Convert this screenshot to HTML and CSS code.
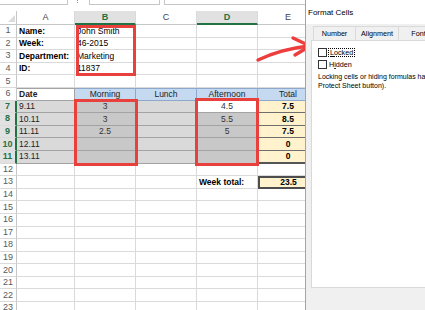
FILE: index.html
```html
<!DOCTYPE html>
<html>
<head>
<meta charset="utf-8">
<link rel="stylesheet" href="styles.css">
</head>
<body>
<div class="app">
  <div class="fbar">
    <div class="fbox namebox"></div>
    <div class="fdots"></div>
    <div class="fbox ficons"></div>
    <div class="fbox finput"></div>
  </div>
  <div class="sheet">
    <div class="c corner"><span class="tri"></span></div>
    <div class="c ch">A</div>
    <div class="c ch sel">B</div>
    <div class="c ch">C</div>
    <div class="c ch sel">D</div>
    <div class="c ch">E</div>

    <div class="c rh">1</div><div class="c b">Name:</div><div class="c">John Smith</div><div class="c"></div><div class="c"></div><div class="c"></div>
    <div class="c rh">2</div><div class="c b">Week:</div><div class="c">46-2015</div><div class="c"></div><div class="c"></div><div class="c"></div>
    <div class="c rh">3</div><div class="c b">Department:</div><div class="c">Marketing</div><div class="c"></div><div class="c"></div><div class="c"></div>
    <div class="c rh">4</div><div class="c b">ID:</div><div class="c">11837</div><div class="c"></div><div class="c"></div><div class="c"></div>
    <div class="c rh">5</div><div class="c"></div><div class="c"></div><div class="c"></div><div class="c"></div><div class="c"></div>

    <div class="c rh">6</div><div class="c t top b">Date</div><div class="c t hd ctr">Morning</div><div class="c t hd ctr">Lunch</div><div class="c t hd ctr">Afternoon</div><div class="c t hd ctr">Total</div>
    <div class="c rh sel">7</div><div class="c t g1">9.11</div><div class="c t g2 ctr">3</div><div class="c t g1"></div><div class="c t wh ctr">4.5</div><div class="c t yl ctr">7.5</div>
    <div class="c rh sel">8</div><div class="c t g1">10.11</div><div class="c t g2 ctr">3</div><div class="c t g1"></div><div class="c t g2 ctr">5.5</div><div class="c t yl ctr">8.5</div>
    <div class="c rh sel">9</div><div class="c t g1">11.11</div><div class="c t g2 ctr">2.5</div><div class="c t g1"></div><div class="c t g2 ctr">5</div><div class="c t yl ctr">7.5</div>
    <div class="c rh sel">10</div><div class="c t g1">12.11</div><div class="c t g2"></div><div class="c t g1"></div><div class="c t g2"></div><div class="c t yl ctr">0</div>
    <div class="c rh sel">11</div><div class="c t g1">13.11</div><div class="c t g2"></div><div class="c t g1"></div><div class="c t g2"></div><div class="c t yl ylast ctr">0</div>

    <div class="c rh">12</div><div class="c"></div><div class="c"></div><div class="c"></div><div class="c"></div><div class="c"></div>
    <div class="c rh">13</div><div class="c"></div><div class="c"></div><div class="c"></div><div class="c b">Week total:</div><div class="c wtot ctr">23.5</div>
    <div class="c rh">14</div><div class="c"></div><div class="c"></div><div class="c"></div><div class="c"></div><div class="c"></div>
    <div class="c rh">15</div><div class="c"></div><div class="c"></div><div class="c"></div><div class="c"></div><div class="c"></div>
    <div class="c rh">16</div><div class="c"></div><div class="c"></div><div class="c"></div><div class="c"></div><div class="c"></div>
    <div class="c rh">17</div><div class="c"></div><div class="c"></div><div class="c"></div><div class="c"></div><div class="c"></div>
    <div class="c rh">18</div><div class="c"></div><div class="c"></div><div class="c"></div><div class="c"></div><div class="c"></div>
    <div class="c rh">19</div><div class="c"></div><div class="c"></div><div class="c"></div><div class="c"></div><div class="c"></div>
    <div class="c rh">20</div><div class="c"></div><div class="c"></div><div class="c"></div><div class="c"></div><div class="c"></div>
    <div class="c rh">21</div><div class="c"></div><div class="c"></div><div class="c"></div><div class="c"></div><div class="c"></div>
    <div class="c rh">22</div><div class="c"></div><div class="c"></div><div class="c"></div><div class="c"></div><div class="c"></div>
    <div class="c rh">23</div><div class="c"></div><div class="c"></div><div class="c"></div><div class="c"></div><div class="c"></div>
  </div>

  <div class="redbox rb1"></div>
  <div class="redbox rb2"></div>
  <div class="redbox rb3"></div>

  <svg class="arrow" width="425" height="310" viewBox="0 0 425 310">
    <path d="M258 60 Q281 49 309 46" fill="none" stroke="#ee3d3d" stroke-width="3.4" stroke-linecap="round"/>
    <path d="M293 38 L310 46 L295 55" fill="none" stroke="#ee3d3d" stroke-width="3.4" stroke-linecap="round" stroke-linejoin="round"/>
  </svg>

  <div class="dialog">
    <div class="dtitle">Format Cells</div>
    <div class="tabs">
      <div class="tab t-num">Number</div>
      <div class="tab t-ali">Alignment</div>
      <div class="tab t-font">Font</div>
    </div>
    <div class="pane">
      <div class="cbrow">
        <span class="cb"></span><span class="lbl focus"><u>L</u>ocked</span>
      </div>
      <div class="cbrow row2">
        <span class="cb"></span><span class="lbl">H<u>i</u>dden</span>
      </div>
      <div class="note">
        <span class="line">Locking cells or hiding formulas has no effect until you protect the worksheet (Review tab, Protect group,</span>
        <span class="line">Protect Sheet button).</span>
      </div>
    </div>
  </div>
</div>
</body>
</html>
```

FILE: styles.css
```css
html, body {
  margin: 0;
  padding: 0;
}
body {
  width: 425px;
  height: 310px;
  overflow: hidden;
  background: #ffffff;
  font-family: "Liberation Sans", Arial, sans-serif;
  color: #000;
}
.app {
  position: relative;
  width: 425px;
  height: 310px;
  overflow: hidden;
}

/* formula bar (cut off at top) */
.fbar {
  display: flex;
  height: 5px;
  margin-bottom: 6px;
}
.fbox {
  box-sizing: border-box;
  height: 5px;
  border-bottom: 1px solid #c6c6c6;
  background: #fff;
}
.namebox {
  width: 68px;
  border-right: 1px solid #c6c6c6;
}
.fdots {
  width: 2px;
  height: 3px;
  margin: 0 9px 0 9px;
  border-left: 1px dotted #9a9a9a;
}
.ficons {
  width: 71px;
  border-left: 1px solid #c6c6c6;
  border-right: 1px solid #c6c6c6;
}
.finput {
  flex: 1;
  margin-left: 4px;
  border-left: 1px solid #c6c6c6;
}

/* sheet grid */
.sheet {
  display: grid;
  grid-template-columns: 17px 58px 61px 61px 61px 61px;
  grid-template-rows: 14px repeat(23, 12.6px);
}
.c {
  box-sizing: border-box;
  border-right: 1px solid #dadada;
  border-bottom: 1px solid #dadada;
  display: flex;
  align-items: center;
  padding: 0 2px;
  overflow: hidden;
  white-space: nowrap;
  font-size: 8.5px;
  line-height: 1;
}
.ctr { justify-content: center; }
.b { font-weight: bold; }

.corner {
  justify-content: flex-end;
  align-items: flex-end;
  padding: 0 1px 2px 0;
  border-right: 1px solid #c6c6c6;
  border-bottom: 1px solid #c6c6c6;
}
.tri {
  width: 0;
  height: 0;
  border-left: 7px solid transparent;
  border-bottom: 7px solid #dcdcdc;
}
.ch {
  justify-content: center;
  color: #444;
  font-size: 9px;
  border-bottom: 1px solid #c6c6c6;
}
.ch.sel {
  background: #e1e1e1;
  color: #217346;
  font-weight: bold;
  border-bottom: 2px solid #217346;
}
.rh {
  justify-content: center;
  padding: 0;
  color: #5a5a5a;
  font-size: 9px;
  border-right: 1px solid #c6c6c6;
}
.rh.sel {
  background: #e1e1e1;
  color: #217346;
  font-weight: bold;
  border-right: 2px solid #217346;
}

/* table */
.t {
  border-right-color: #a3a3a3;
  border-bottom-color: #a3a3a3;
  color: #222;
}
.top { box-shadow: inset 0 1px 0 #a3a3a3; }
.hd {
  background: #c5d9f1;
  border-right-color: #8ea8cc;
  border-bottom-color: #8ea8cc;
  box-shadow: inset 0 1px 0 #8ea8cc;
  color: #222;
}
.g1 { background: #d9d9d9; }
.g2 { background: #c8c8c8; color: #333; }
.wh { background: #ffffff; color: #333; }
.yl {
  background: #fff2cc;
  font-weight: bold;
  color: #000;
  border-right-color: #6e6e6e;
  border-bottom-color: #6e6e6e;
  box-shadow: inset 1px 0 0 #6e6e6e;
}
.ylast { border-bottom: 2px solid #555; }
.wtot {
  background: #fff2cc;
  font-weight: bold;
  border: 2px solid #4d4d4d;
}

/* annotations */
.redbox {
  position: absolute;
  box-sizing: border-box;
  border: 3px solid #e8403c;
}
.rb1 { left: 76px; top: 25px; width: 60px; height: 51px; }
.rb2 { left: 74px; top: 99px; width: 64px; height: 67px; }
.rb3 { left: 195px; top: 98px; width: 64px; height: 68px; }
.arrow {
  position: absolute;
  left: 0;
  top: 0;
}

/* dialog */
.dialog {
  position: absolute;
  left: 305px;
  top: 0;
  width: 130px;
  height: 310px;
  box-sizing: border-box;
  border-left: 1px solid #8aa8d6;
  background: #f0f0f0;
  overflow: hidden;
  font-size: 7px;
}
.dtitle {
  height: 24px;
  background: #ffffff;
  display: flex;
  align-items: center;
  padding-left: 2px;
  font-size: 8px;
  color: #000;
}
.tabs {
  display: flex;
  margin-top: 2px;
  padding-left: 7px;
  height: 14px;
}
.tab {
  flex: 0 0 auto;
  box-sizing: border-box;
  height: 14px;
  display: flex;
  align-items: center;
  justify-content: center;
  border: 1px solid #d9d9d9;
  border-bottom: none;
  border-right: none;
  background: #f0f0f0;
  white-space: nowrap;
  font-size: 7.2px;
}
.t-num { width: 42px; }
.t-ali { width: 43px; }
.t-font { width: 40px; }
.pane {
  box-sizing: border-box;
  margin-left: 5px;
  width: 200px;
  height: 248px;
  background: #ffffff;
  border: 1px solid #d9d9d9;
  padding: 6px 0 0 6px;
}
.cbrow {
  display: flex;
  align-items: center;
  height: 10px;
}
.row2 { margin-top: 2px; }
.cb {
  box-sizing: border-box;
  width: 9px;
  height: 9px;
  border: 1px solid #333;
  background: #fff;
}
.lbl {
  margin-left: 2px;
  white-space: nowrap;
  font-size: 7.2px;
}
.lbl.focus {
  margin-left: 1px;
  padding: 0 1px;
  border: 1px dotted #000;
  line-height: 7px;
}
.note {
  margin-top: 3px;
  line-height: 9px;
}
.line {
  display: block;
  white-space: nowrap;
}
```
